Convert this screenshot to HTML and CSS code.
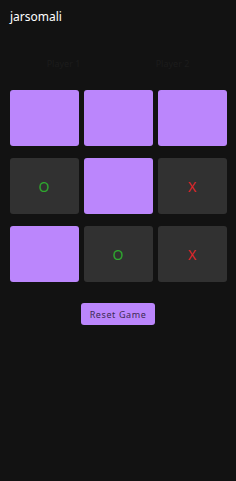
FILE: index.html
```html
<!DOCTYPE html>
<html lang="en">
<head>
    <meta charset="UTF-8">
    <meta name="viewport" content="width=device-width, initial-scale=1.0">
    <title>jarsomali</title>
    <link rel="stylesheet" href="styles.css">
</head>
<body>
    <div class="app">
        <header class="title">jarsomali</header>

        <div class="players">
            <span>Player 1</span>
            <span>Player 2</span>
        </div>

        <section class="board">
            <div class="cell empty"></div>
            <div class="cell empty"></div>
            <div class="cell empty"></div>
            <div class="cell played o">O</div>
            <div class="cell empty"></div>
            <div class="cell played x">X</div>
            <div class="cell empty"></div>
            <div class="cell played o">O</div>
            <div class="cell played x">X</div>
        </section>

        <div class="actions">
            <button class="reset-btn">Reset Game</button>
        </div>
    </div>
</body>
</html>
```

FILE: styles.css
```css
body {
    margin: 0;
    padding: 0;
    background-color: #121212;
    font-family: "Noto Sans", "Open Sans", sans-serif;
}

.app {
    height: 481px;
}

/* Cabeçalho */
.title {
    color: #ffffff;
    font-size: 12px;
    line-height: 16px;
    padding: 9px 10px 0;
}

/* Jogadores */
.players {
    display: flex;
    margin: 33px 9px 0;
    color: #1c1c1c;
    font-size: 9px;
    line-height: 12px;
}

.players span {
    flex: 1;
    text-align: center;
}

/* Tabuleiro */
.board {
    display: grid;
    grid-template-columns: repeat(3, 69px);
    grid-auto-rows: 56px;
    gap: 12px 5px;
    justify-content: center;
    margin-top: 20px;
}

.cell {
    border-radius: 3px;
    display: flex;
    align-items: center;
    justify-content: center;
    font-size: 14px;
}

.cell.empty {
    background-color: #bb86fc;
}

.cell.played {
    background-color: #313131;
}

.cell.o {
    color: #2ea82e;
}

.cell.x {
    color: #e0262a;
}

/* Botão */
.actions {
    display: flex;
    justify-content: center;
    margin-top: 21px;
}

.reset-btn {
    width: 74px;
    height: 22px;
    padding: 0;
    background-color: #bb86fc;
    color: #3b2a55;
    border: none;
    border-radius: 3px;
    font-family: "Noto Sans", "Open Sans", sans-serif;
    font-size: 9px;
    letter-spacing: 0.6px;
}
```
